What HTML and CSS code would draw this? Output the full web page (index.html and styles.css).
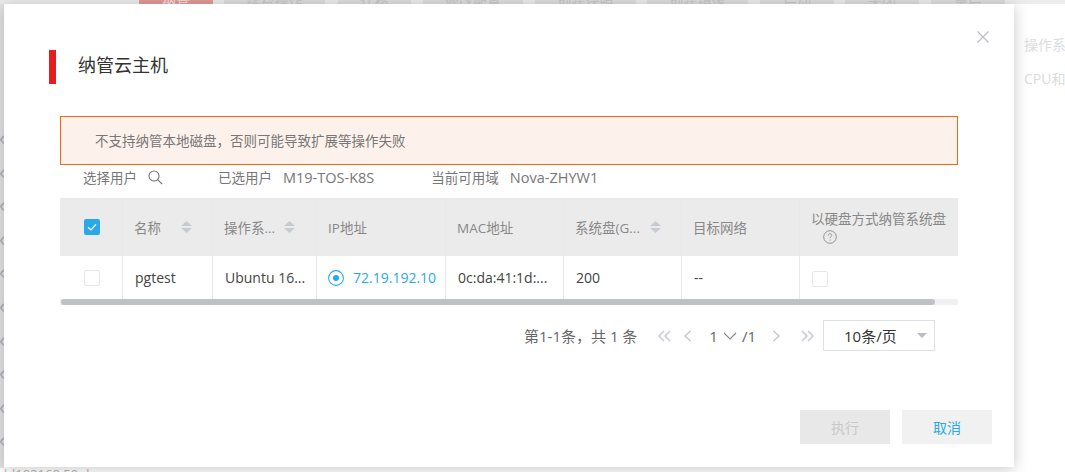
FILE: index.html
```html
<!DOCTYPE html>
<html lang="zh-CN">
<head>
<meta charset="utf-8">
<title>纳管云主机</title>
<link rel="stylesheet" href="styles.css">
</head>
<body>
<div class="page">
  <div class="bg-toolbar">
    <span class="bg-btn bg-red w74">纳管</span>
    <span class="bg-btn w101">续费操作</span>
    <span class="bg-btn w73 ml2">迁移</span>
    <span class="bg-btn w100 ml1">修改配置</span>
    <span class="bg-btn w101 ml1">创建快照</span>
    <span class="bg-btn w101">创建镜像</span>
    <span class="bg-btn w74 ml1">启动</span>
    <span class="bg-btn w74">关闭</span>
    <span class="bg-btn w74 ml1">重启</span>
  </div>
  <div class="bg-main">
    <div class="bg-chevrons">
      <span class="bg-chev">‹</span><span class="bg-chev">‹</span><span class="bg-chev">‹</span><span class="bg-chev">‹</span><span class="bg-chev">‹</span>
      <span class="bg-chev">‹</span><span class="bg-chev">‹</span><span class="bg-chev">‹</span><span class="bg-chev">‹</span><span class="bg-chev">‹</span>
    </div>
    <div class="bg-side">
      <div class="bg-side-line">操作系统</div>
      <div class="bg-side-line">CPU和内存</div>
    </div>
  </div>
  <div class="bg-foot">hl192168.50.d</div>

  <div class="modal">
    <svg class="close" viewBox="0 0 12 12" width="12" height="12"><path d="M.5.5l11 11M11.500.5l-11 11" fill="none" stroke="#b9bcc2" stroke-width="1.1"/></svg>

    <div class="title-row">
      <span class="title-bar"></span>
      <h2 class="title">纳管云主机</h2>
    </div>

    <div class="content">
      <div class="alert">不支持纳管本地磁盘，否则可能导致扩展等操作失败</div>

      <div class="filters">
        <span class="f-user">选择用户</span>
        <svg class="f-search" viewBox="0 0 15 15" width="15" height="15"><circle cx="6" cy="6" r="5" fill="none" stroke="#777" stroke-width="1.1"/><path d="M9.600 9.600l4.600 4.600" stroke="#777" stroke-width="1.2" fill="none"/></svg>
        <span class="f-selected">已选用户</span>
        <span class="f-value">M19-TOS-K8S</span>
        <span class="f-zone">当前可用域</span>
        <span class="f-value f-value2">Nova-ZHYW1</span>
      </div>

      <div class="table">
        <div class="cell head check-cell">
          <span class="check checked"><svg viewBox="0 0 16 16" width="16" height="16"><path d="M4 8.200l3 2.800 5-5.600" fill="none" stroke="#fff" stroke-width="1.2"/></svg></span>
        </div>
        <div class="cell head"><span class="h-name">名称</span><svg class="sort" viewBox="0 0 11 12" width="11" height="12"><path d="M5.500 0L11 5H0zM5.500 12L0 7h11z" fill="#c6cbd3"/></svg></div>
        <div class="cell head"><span>操作系...</span><svg class="sort sort-os" viewBox="0 0 11 12" width="11" height="12"><path d="M5.500 0L11 5H0zM5.500 12L0 7h11z" fill="#c6cbd3"/></svg></div>
        <div class="cell head">IP地址</div>
        <div class="cell head">MAC地址</div>
        <div class="cell head"><span>系统盘(G...</span><svg class="sort sort-disk" viewBox="0 0 11 12" width="11" height="12"><path d="M5.500 0L11 5H0zM5.500 12L0 7h11z" fill="#c6cbd3"/></svg></div>
        <div class="cell head">目标网络</div>
        <div class="cell head head-stack">
          <span>以硬盘方式纳管系统盘</span>
          <svg class="help" viewBox="0 0 14 14" width="14" height="14"><circle cx="7" cy="7" r="6.300" fill="none" stroke="#8a8a8a" stroke-width=".9"/><path d="M5.200 5.600c0-1.200.8-1.900 1.800-1.900s1.800.7 1.800 1.600c0 1.300-1.700 1.400-1.700 2.900M7.100 9.600v1" fill="none" stroke="#8a8a8a" stroke-width=".9"/></svg>
        </div>

        <div class="cell body check-cell"><span class="check"></span></div>
        <div class="cell body">pgtest</div>
        <div class="cell body">Ubuntu 16...</div>
        <div class="cell body ip">
          <svg class="radio" viewBox="0 0 16 16" width="16" height="16"><circle cx="8" cy="8" r="7.400" fill="none" stroke="#29a9e8" stroke-width="1.1"/><circle cx="8" cy="8" r="3" fill="#29a9e8"/></svg>
          <span>72.19.192.10</span>
        </div>
        <div class="cell body">0c:da:41:1d:...</div>
        <div class="cell body">200</div>
        <div class="cell body">--</div>
        <div class="cell body"><span class="check check-last"></span></div>
      </div>
      <div class="scroll"><div class="thumb"></div></div>

      <div class="pager">
        <span class="p-total">第1-1条，共 1 条</span>
        <svg class="p-ico p-first" viewBox="0 0 15 12" width="15" height="12"><path d="M7 1L2 6l5 5M13 1L8 6l5 5" fill="none" stroke="#c6cad6" stroke-width="1.5"/></svg>
        <svg class="p-ico p-prev" viewBox="0 0 9 12" width="9" height="12"><path d="M7.500 1L2 6l5.500 5" fill="none" stroke="#c6cad6" stroke-width="1.5"/></svg>
        <span class="p-num">1</span>
        <svg class="p-ico p-down" viewBox="0 0 14 8" width="14" height="8"><path d="M1 1l6 6 6-6" fill="none" stroke="#888" stroke-width="1.1"/></svg>
        <span class="p-of">/1</span>
        <svg class="p-ico p-next" viewBox="0 0 9 12" width="9" height="12"><path d="M1.500 1L7 6l-5.500 5" fill="none" stroke="#c6cad6" stroke-width="1.5"/></svg>
        <svg class="p-ico p-last" viewBox="0 0 15 12" width="15" height="12"><path d="M2 1l5 5-5 5M8 1l5 5-5 5" fill="none" stroke="#c6cad6" stroke-width="1.5"/></svg>
        <div class="p-select">
          <span>10条/页</span>
          <svg viewBox="0 0 10 5" width="10" height="5"><path d="M0 0h10L5 5z" fill="#bcbcc4"/></svg>
        </div>
      </div>
    </div>

    <div class="footer">
      <button class="btn btn-disabled">执行</button>
      <button class="btn btn-cancel">取消</button>
    </div>
  </div>
</div>
</body>
</html>
```

FILE: styles.css
```css
* { box-sizing: border-box; }
html, body { margin: 0; padding: 0; }
body {
  width: 1065px;
  height: 472px;
  overflow: hidden;
  background: #fff;
  font-family: "Open Sans", "Noto Sans CJK SC", sans-serif;
}
.page {
  position: relative;
  width: 1065px;
  height: 472px;
  overflow: hidden;
  background: #fff;
}

/* dimmed page behind the dialog */
.bg-toolbar {
  display: flex;
  gap: 11px;
  height: 4px;
  padding-left: 139px;
  background: #ececec;
  overflow: hidden;
}
.bg-btn {
  flex: none;
  height: 30px;
  margin-top: -14px;
  line-height: 30px;
  text-align: center;
  font-size: 14px;
  color: #c8c8c8;
  background: #dedede;
}
.bg-red { background: #e29a9a; color: #f5e0e0; }
.w74 { width: 74px; }
.w73 { width: 73px; }
.w100 { width: 100px; }
.w101 { width: 101px; }
.ml1 { margin-left: 1px; }
.ml2 { margin-left: 2px; }
.bg-main {
  display: flex;
  justify-content: space-between;
  height: 464px;
}
.bg-chevrons {
  display: flex;
  flex-direction: column;
  gap: 13.6px;
  padding-top: 124px;
  width: 4px;
  background: #e4e4e4;
  overflow: hidden;
}
.bg-chev {
  height: 20px;
  line-height: 20px;
  font-size: 20px;
  color: #a9b0bd;
  margin-left: -1px;
}
.bg-side {
  width: 41px;
  padding-top: 30px;
  overflow: hidden;
  white-space: nowrap;
  color: #dcdcdc;
  font-size: 14px;
}
.bg-side-line { height: 33.5px; line-height: 22px; }
.bg-foot {
  height: 4px;
  padding-left: 4px;
  font-size: 13px;
  line-height: 13px;
  color: #b4b4b4;
  background: #fff;
  overflow: hidden;
}

/* dialog */
.modal {
  position: absolute;
  left: 4px;
  top: 4px;
  width: 1010px;
  height: 463px;
  padding: 46px 22px 0 56px;
  background: #fff;
  box-shadow: 0 2px 14px rgba(0, 0, 0, .22);
}
.close {
  position: absolute;
  right: 25px;
  top: 27px;
}
.title-row {
  display: flex;
  align-items: center;
  height: 34px;
  margin-left: -11px;
}
.title-bar {
  width: 7px;
  height: 34px;
  background: #e61c1e;
}
.title {
  margin: 0 0 7px 22px;
  font-size: 18px;
  font-weight: 400;
  color: #333;
}
.content { width: 898px; }
.alert {
  height: 49px;
  margin-top: 32px;
  padding-left: 34px;
  line-height: 48px;
  font-size: 13.5px;
  color: #777;
  background: #fdf1ec;
  border: 1px solid #ee6a0c;
}
.filters {
  display: flex;
  align-items: center;
  height: 33px;
  padding: 0 0 9px 23px;
  font-size: 13.5px;
  color: #777;
}
.f-search { margin-left: 11px; }
.f-selected { margin-left: 55px; }
.f-value { margin-left: 11px; font-size: 14.5px; }
.f-zone { margin-left: 57px; }

.table {
  display: grid;
  grid-template-columns: 63px 90px 104px 129px 118px 118px 118px 158px;
  grid-template-rows: 58px 43px;
}
.cell {
  display: flex;
  align-items: center;
  border-right: 1px solid #e8e8e8;
  overflow: hidden;
  white-space: nowrap;
}
.cell:nth-child(8n) { border-right: 0; }
.head {
  padding-left: 11px;
  background: #ebebeb;
  font-size: 13.5px;
  color: #888;
}
.body {
  padding-left: 12px;
  font-size: 14px;
  color: #444;
  background: #fff;
}
.check-cell { padding-left: 24px; }
.check {
  display: block;
  width: 16px;
  height: 16px;
  border: 1px solid #e7e7ea;
  border-radius: 2px;
  background: #fff;
}
.checked {
  border: 0;
  background: #29a9e8;
}
.checked svg { display: block; }
.check-last { margin-top: 2px; }
.sort { flex: none; margin-left: 19px; }
.sort-os { margin-left: 9px; }
.sort-disk { margin-left: 10px; }
.h-name { width: 28px; }
.head-stack {
  flex-direction: column;
  align-items: flex-start;
  justify-content: center;
  gap: 2px;
  padding: 0 0 2px 11px;
}
.help { margin-left: 12px; }
.ip { color: #29a9e8; padding-left: 11px; }
.radio { flex: none; margin-right: 9px; }
.scroll {
  height: 6px;
  background: #f1f1f3;
}
.thumb {
  width: 874px;
  height: 6px;
  margin-left: 1px;
  border-radius: 3px;
  background: #bfc2c5;
}

.pager {
  display: flex;
  align-items: center;
  height: 31px;
  margin-top: 15px;
  padding-left: 464px;
  font-size: 15px;
  color: #666;
}
.p-ico { flex: none; display: block; }
.p-first { margin-left: 20px; }
.p-prev { margin-left: 11px; }
.p-num { margin-left: 17px; }
.p-down { margin-left: 5px; }
.p-of { margin-left: 5px; }
.p-next { margin-left: 16px; }
.p-last { margin-left: 19px; }
.p-select {
  display: flex;
  align-items: center;
  justify-content: space-between;
  width: 112px;
  height: 31px;
  margin-left: 8px;
  padding: 0 7px 0 20px;
  border: 1px solid #dfdfe6;
  color: #333;
}
.footer {
  display: flex;
  justify-content: flex-end;
  gap: 12px;
  margin-top: 59px;
}
.btn {
  width: 90px;
  height: 34px;
  padding: 0;
  border: 0;
  font-family: inherit;
  font-size: 14px;
}
.btn-disabled { background: #e8e8e8; color: #c9c9c9; }
.btn-cancel { background: #f1f1f1; color: #29a9e8; }
```
